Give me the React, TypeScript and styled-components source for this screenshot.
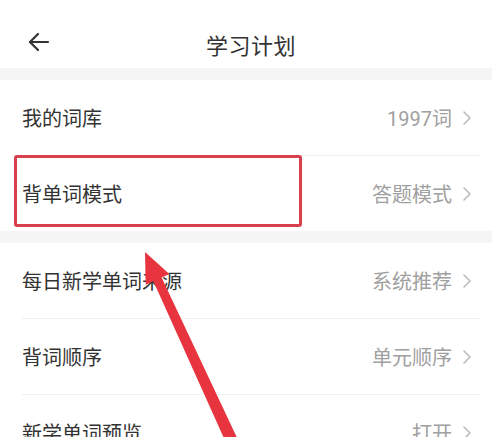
import styled, { createGlobalStyle } from "styled-components";

const GlobalStyle = createGlobalStyle`
    html, body {
        margin: 0;
        padding: 0;
        background: #ffffff;
        overflow: hidden;
    }

    body {
        font-family: Roboto, "Noto Sans CJK SC", sans-serif;
    }
`;

type Item = {
    label: string;
    value: string;
};

const groups: Item[][] = [
    [
        { label: "我的词库", value: "1997词" },
        { label: "背单词模式", value: "答题模式" },
    ],
    [
        { label: "每日新学单词来源", value: "系统推荐" },
        { label: "背词顺序", value: "单元顺序" },
        { label: "新学单词预览", value: "打开" },
    ],
];

const BackArrow = () => (
    <svg width="24" height="24" viewBox="0 0 24 24" fill="none" stroke="#333333" strokeWidth="2.2" strokeLinecap="round" strokeLinejoin="round">
        <path d="M21 12H3" />
        <path d="M11 4l-8 8 8 8" />
    </svg>
);

const Chevron = () => (
    <svg width="10" height="16" viewBox="0 0 10 16" fill="none" stroke="#bbbbbb" strokeWidth="1.6" strokeLinecap="round" strokeLinejoin="round">
        <path d="M2 2l6 6-6 6" />
    </svg>
);

const App = () => {
    return (
        <Page>
            <GlobalStyle />
            <StatusBar />
            <Header>
                <BackButton>
                    <BackArrow />
                </BackButton>
                <Title>学习计划</Title>
            </Header>

            {groups.map((group, gi) => (
                <Group key={gi}>
                    {group.map((item, i) => (
                        <Row key={item.label} $first={i === 0}>
                            <Label>{item.label}</Label>
                            <Value>
                                {item.value}
                                <Chevron />
                            </Value>
                        </Row>
                    ))}
                </Group>
            ))}

            <Highlight />

            <Pointer viewBox="0 0 492 437" width="492" height="437">
                <polygon
                    points="145,252 169.3,273.9 161.6,277.4 236.9,437.5 225.9,442.5 153.4,281.2 145.7,284.7"
                    fill="#e8343e"
                />
            </Pointer>
        </Page>
    );
};

const Page = styled.div`
    position: relative;
    width: 492px;
    height: 437px;
    overflow: hidden;
    background: #ffffff;
`;

const StatusBar = styled.div`
    height: 20px;
`;

const Header = styled.div`
    position: relative;
    height: 48px;
    display: flex;
    align-items: center;
    justify-content: center;
`;

const BackButton = styled.div`
    position: absolute;
    left: 27px;
    top: 10px;
    display: flex;
`;

const Title = styled.h1`
    margin: 0 0 0 10px;
    font-size: 22px;
    font-weight: 400;
    color: #333333;
    letter-spacing: 0.5px;
`;

const Group = styled.div`
    border-top: 12px solid #f5f5f5;
`;

const Row = styled.div<{ $first?: boolean }>`
    height: 75px;
    margin: 0 12px 0 22px;
    padding-right: 8px;
    display: flex;
    align-items: center;
    justify-content: space-between;
    border-top: ${(p) => (p.$first ? "none" : "1px solid #f0f0f0")};
`;

const Label = styled.span`
    font-size: 20px;
    color: #333333;
`;

const Value = styled.span`
    display: flex;
    align-items: center;
    gap: 10px;
    font-size: 20px;
    color: #a0a0a0;
`;

const Highlight = styled.div`
    position: absolute;
    left: 14px;
    top: 155px;
    width: 282px;
    height: 66px;
    border: 3px solid #d9404e;
    border-radius: 3px;
    pointer-events: none;
`;

const Pointer = styled.svg`
    position: absolute;
    left: 0;
    top: 0;
    pointer-events: none;
`;

export default App;
